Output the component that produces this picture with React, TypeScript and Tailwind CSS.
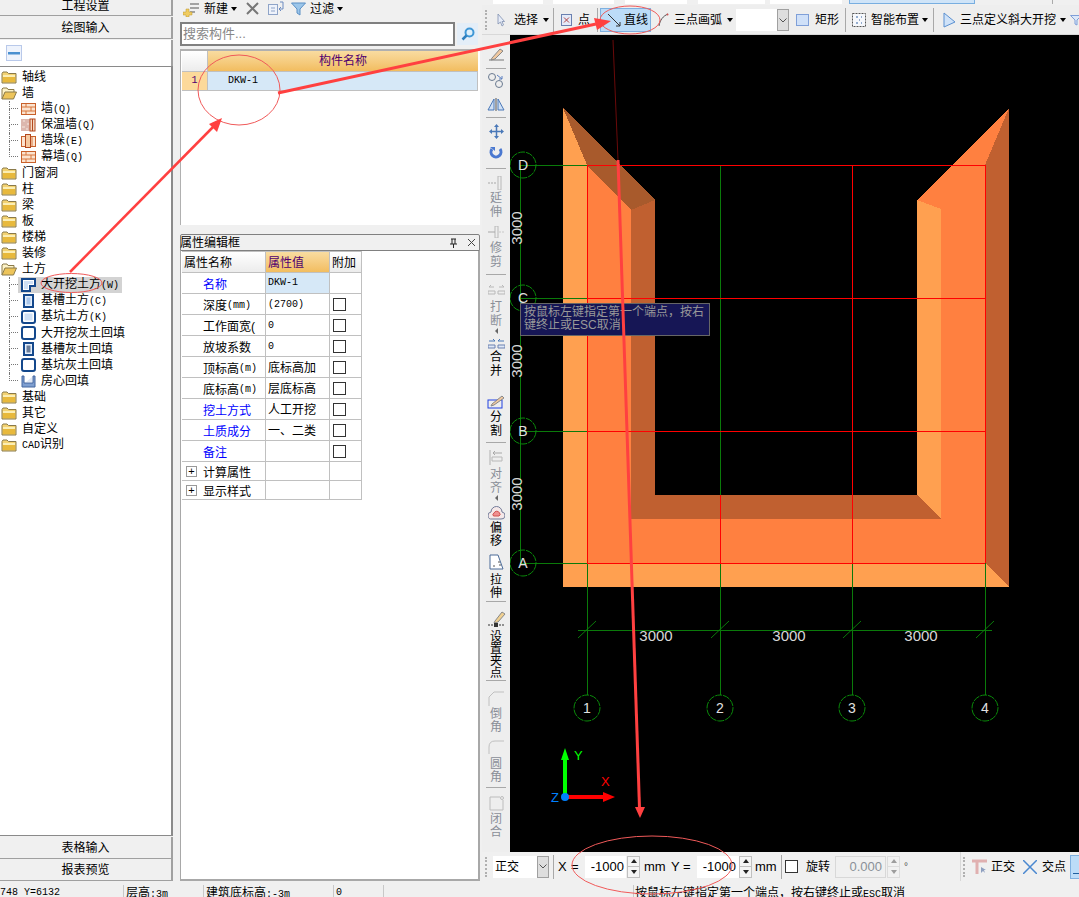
import type { ReactNode } from 'react'

const mono = "font-['Liberation_Mono','Noto_Sans_CJK_SC',monospace] text-[10px]"

function FolderClosed() {
  return (
    <svg width="16" height="14" viewBox="0 0 16 14" className="shrink-0">
      <path d="M1 3.5 L2 2 H6 L7.5 3.5 H15 V13 H1 Z" fill="#f3d271" stroke="#8a7a4a" />
      <rect x="2" y="5" width="12" height="7" fill="#e8b93c" />
      <rect x="2" y="5" width="12" height="2" fill="#fbeeb4" />
    </svg>
  )
}

function FolderOpen() {
  return (
    <svg width="16" height="14" viewBox="0 0 16 14" className="shrink-0">
      <path d="M1 13 V3 L2 2 H6 L7 3.5 H13 V6" fill="#fdf3c8" stroke="#8a7a4a" />
      <path d="M1 13 L4 6 H15.5 L12.5 13 Z" fill="#edc45a" stroke="#8a7a4a" />
    </svg>
  )
}

function BrickIcon() {
  return (
    <svg width="15" height="14" viewBox="0 0 15 14" className="shrink-0">
      <rect x="0.5" y="1.5" width="14" height="11" fill="#fbe3cf" stroke="#c8602a" />
      <path d="M1 5 H14 M1 9 H14 M5 2 V5 M10 5 V9 M5 9 V12" stroke="#d8763c" fill="none" />
    </svg>
  )
}

function InsulatedIcon() {
  return (
    <svg width="15" height="14" viewBox="0 0 15 14" className="shrink-0">
      <rect x="0" y="1" width="9" height="12" fill="#dcb7ae" />
      <path d="M2 3h2M6 6h2M1 9h3M5 11h2" stroke="#f5e8e0" />
      <rect x="9" y="1" width="5" height="12" fill="#f4d9c4" stroke="#b3481e" />
      <path d="M11.5 1V13" stroke="#b3481e" />
    </svg>
  )
}

function PierIcon() {
  return (
    <svg width="15" height="14" viewBox="0 0 15 14" className="shrink-0">
      <rect x="0.5" y="2.5" width="14" height="10" fill="#fbe3cf" stroke="#c8602a" />
      <rect x="4.5" y="0.5" width="5" height="13" fill="#f6c9a0" stroke="#b3481e" />
      <path d="M11 3V12" stroke="#d8763c" />
    </svg>
  )
}

function PitIcon({ kind }: { kind: 'open' | 'trench' | 'pit' | 'openFill' | 'trenchFill' | 'pitFill' }) {
  if (kind === 'open') {
    return (
      <svg width="15" height="14" viewBox="0 0 15 14" className="shrink-0">
        <path d="M1 1 H14 V8 H9 V13 H1 Z" fill="#fff" stroke="#14488c" strokeWidth="2" />
        <path d="M3 3 H12 V6 H7 V11 H3 Z" fill="#cfe0f5" />
      </svg>
    )
  }
  if (kind === 'trench' || kind === 'trenchFill') {
    return (
      <svg width="15" height="14" viewBox="0 0 15 14" className="shrink-0">
        <rect x="3" y="1" width="9" height="12" fill="#e4eefa" stroke="#14488c" strokeWidth="2" />
        <rect x="5.5" y="3.5" width="4" height="7" fill={kind === 'trench' ? '#a9c6ea' : '#6a7d99'} />
      </svg>
    )
  }
  return (
    <svg width="15" height="14" viewBox="0 0 15 14" className="shrink-0">
      <rect x="1" y="1" width="13" height="12" rx="2" fill="#fff" stroke="#14488c" strokeWidth="2" />
      {kind === 'pit' && <rect x="3.5" y="3.5" width="8" height="7" fill="#cfe0f5" />}
    </svg>
  )
}

function RoomFillIcon() {
  return (
    <svg width="15" height="14" viewBox="0 0 15 14" className="shrink-0">
      <path d="M1 2 V13 H14 V2 H12 V9 H3 V2 Z" fill="#7f9fd0" stroke="#4466a0" />
      <path d="M5 8 L11 3 V8 Z" fill="#dfe7f5" />
    </svg>
  )
}

function TreeFolder({ label, open }: { label: ReactNode; open?: boolean }) {
  return (
    <div className="flex h-4 items-center pl-[1px]">
      {open ? <FolderOpen /> : <FolderClosed />}
      <span className="ml-[5px] whitespace-nowrap">{label}</span>
    </div>
  )
}

function TreeChild({ icon, label, last, active }: { icon: ReactNode; label: ReactNode; last?: boolean; active?: boolean }) {
  return (
    <div className="flex h-4 pl-[9px]">
      <div className="w-[9px] shrink-0">
        <div className="h-2 border-b border-l border-dotted border-[#777]" />
        {!last && <div className="h-2 border-l border-dotted border-[#777]" />}
      </div>
      <div className={active ? 'flex h-4 items-center bg-[#d3d3d3] pl-[3px] pr-[3px]' : 'flex h-4 items-center pl-[3px]'}>
        {icon}
        <span className="ml-[5px] whitespace-nowrap">{label}</span>
      </div>
    </div>
  )
}

function SideButton({ label, className }: { label: string; className: string }) {
  return (
    <div className={`flex items-center justify-center border-b border-r-2 border-[#a0a0a0] bg-[#f0f0f0] ${className}`}>{label}</div>
  )
}

function LeftPanel() {
  return (
    <div className="flex h-[881px] w-[173px] shrink-0 flex-col">
      <SideButton label="工程设置" className="h-[16px] overflow-hidden pb-[3px]" />
      <SideButton label="绘图输入" className="mt-px h-[22px] pt-px" />
      <div className="mt-[1px] flex h-[26px] items-center border-r-2 border-[#a0a0a0] bg-white pl-[6px]">
        <svg width="16" height="16" viewBox="0 0 16 16">
          <rect x="0.5" y="0.5" width="15" height="15" fill="#eef3fc" stroke="#b9c9ea" />
          <rect x="2" y="7" width="12" height="2.5" fill="#4a90d0" />
        </svg>
      </div>
      <div className="min-h-0 flex-1 border-r-2 border-t border-b border-[#8a8a8a] bg-white pt-[2px]">
        <TreeFolder label="轴线" />
        <TreeFolder label="墙" open />
        <TreeChild icon={<BrickIcon />} label={<>墙<span className={mono}>(Q)</span></>} />
        <TreeChild icon={<InsulatedIcon />} label={<>保温墙<span className={mono}>(Q)</span></>} />
        <TreeChild icon={<PierIcon />} label={<>墙垛<span className={mono}>(E)</span></>} />
        <TreeChild icon={<BrickIcon />} label={<>幕墙<span className={mono}>(Q)</span></>} last />
        <TreeFolder label="门窗洞" />
        <TreeFolder label="柱" />
        <TreeFolder label="梁" />
        <TreeFolder label="板" />
        <TreeFolder label="楼梯" />
        <TreeFolder label="装修" />
        <TreeFolder label="土方" open />
        <TreeChild icon={<PitIcon kind="open" />} label={<>大开挖土方<span className={mono}>(W)</span></>} active />
        <TreeChild icon={<PitIcon kind="trench" />} label={<>基槽土方<span className={mono}>(C)</span></>} />
        <TreeChild icon={<PitIcon kind="pit" />} label={<>基坑土方<span className={mono}>(K)</span></>} />
        <TreeChild icon={<PitIcon kind="openFill" />} label="大开挖灰土回填" />
        <TreeChild icon={<PitIcon kind="trenchFill" />} label="基槽灰土回填" />
        <TreeChild icon={<PitIcon kind="pitFill" />} label="基坑灰土回填" />
        <TreeChild icon={<RoomFillIcon />} label="房心回填" last />
        <TreeFolder label="基础" />
        <TreeFolder label="其它" />
        <TreeFolder label="自定义" />
        <TreeFolder label={<><span className={mono}>CAD</span>识别</>} />
      </div>
      <SideButton label="表格输入" className="mt-px h-[22px]" />
      <SideButton label="报表预览" className="h-[22px]" />
    </div>
  )
}

function PropName({ children, blue }: { children: ReactNode; blue?: boolean }) {
  return <div className={blue ? 'flex items-center border-b border-r border-[#c0c0c0] pl-[21px] pt-[3px] text-[#0000ff]' : 'flex items-center border-b border-r border-[#c0c0c0] pl-[21px] pt-[3px]'}>{children}</div>
}

function PropValue({ children }: { children?: ReactNode }) {
  return <div className="flex items-center whitespace-nowrap border-b border-r border-[#c0c0c0] pl-[2px] pt-px">{children}</div>
}

function PropCheck() {
  return (
    <div className="flex items-center border-b border-r border-[#c0c0c0] pl-[3px]">
      <div className="h-[13px] w-[13px] border border-[#333] bg-white" />
    </div>
  )
}

function ExpandRow({ label }: { label: string }) {
  return (
    <>
      <div className="flex items-center border-b border-r border-[#c0c0c0] pl-[4px]">
        <div className="flex h-[11px] w-[11px] items-center justify-center border border-[#999] bg-white text-[11px] leading-none">+</div>
        <span className="ml-[6px] pt-[3px]">{label}</span>
      </div>
      <div className="border-b border-r border-[#c0c0c0]" />
      <div className="border-b border-r border-[#c0c0c0]" />
    </>
  )
}

function PropTable() {
  const rows: [string, string][] = [
    ['工作面宽(', '0'],
    ['放坡系数', '0'],
  ]
  return (
    <div className="grid w-[180px] grid-cols-[84px_64px_32px] grid-rows-[21px_21px_21px_21px_21px_21px_21px_21px_21px_21px_19px_19px] border-t border-[#c0c0c0]">
      <div className="flex items-center border-b border-r border-[#c0c0c0] bg-gradient-to-b from-white to-[#ececec] pl-[2px] pt-px">属性名称</div>
      <div className="flex items-center border-b border-r border-[#c0c0c0] bg-gradient-to-b from-[#f9dca0] to-[#f2bd5f] pl-[2px] pt-px text-[#500070]">属性值</div>
      <div className="flex items-center border-b border-r border-[#c0c0c0] bg-gradient-to-b from-white to-[#ececec] pl-[2px] pt-px">附加</div>

      <PropName blue>名称</PropName>
      <div className={`flex items-center border-b border-r border-[#c0c0c0] bg-[#d6e8f7] pl-[2px] ${mono}`}>DKW-1</div>
      <div className="border-b border-r border-[#c0c0c0]" />

      <PropName>深度<span className={mono}>(mm)</span></PropName>
      <PropValue><span className={mono}>(2700)</span></PropValue>
      <PropCheck />

      {rows.map(([name, value]) => (
        <div key={name} className="contents">
          <PropName>{name}</PropName>
          <PropValue><span className={mono}>{value}</span></PropValue>
          <PropCheck />
        </div>
      ))}

      <PropName>顶标高<span className={mono}>(m)</span></PropName>
      <PropValue>底标高加</PropValue>
      <PropCheck />

      <PropName>底标高<span className={mono}>(m)</span></PropName>
      <PropValue>层底标高</PropValue>
      <PropCheck />

      <PropName blue>挖土方式</PropName>
      <PropValue>人工开挖</PropValue>
      <PropCheck />

      <PropName blue>土质成分</PropName>
      <PropValue>一、二类</PropValue>
      <PropCheck />

      <PropName blue>备注</PropName>
      <PropValue />
      <PropCheck />

      <ExpandRow label="计算属性" />
      <ExpandRow label="显示样式" />
    </div>
  )
}

function Caret({ className }: { className?: string }) {
  return <div className={`h-0 w-0 shrink-0 border-x-[3px] border-t-[4px] border-x-transparent border-t-black ${className ?? ''}`} />
}

function MiddlePanel() {
  return (
    <div className="ml-[7px] flex h-[881px] w-[300px] shrink-0 flex-col">
      <div className="flex h-[21px] items-center pb-[4px]">
        <svg width="17" height="16" viewBox="0 0 17 16" className="ml-[3px] shrink-0">
          <path d="M7 3H16M7 7H16M7 11H12" stroke="#555" />
          <path d="M3 8H6V11H9V14H6V16H3V14H0V11H3Z" fill="#f0cc60" stroke="#b89530" strokeWidth="0.5" />
        </svg>
        <span className="ml-[4px]">新建</span>
        <Caret className="ml-[3px]" />
        <svg width="13" height="13" viewBox="0 0 13 13" className="ml-[9px] shrink-0">
          <path d="M1 1L12 12M12 1L1 12" stroke="#777" strokeWidth="2" />
        </svg>
        <svg width="16" height="15" viewBox="0 0 16 15" className="ml-[9px] shrink-0">
          <rect x="0.5" y="3.5" width="9" height="10" fill="#eef2fa" stroke="#8fa4c8" />
          <path d="M3 7H7M3 10H7" stroke="#8fa4c8" />
          <path d="M12 1H15V8H12M13 10L11 8L13 6" fill="none" stroke="#6a8ac0" />
        </svg>
        <svg width="15" height="14" viewBox="0 0 15 14" className="ml-[7px] shrink-0">
          <path d="M0.5 1H14.5L9 7V13L6 11V7Z" fill="#9cc6ea" stroke="#5a8fc4" />
        </svg>
        <span className="ml-[4px]">过滤</span>
        <Caret className="ml-[3px]" />
      </div>
      <div className="mt-px flex h-[24px] items-center">
        <div className="flex h-[24px] w-[275px] items-center border-2 border-[#808080] bg-white pl-[1px] text-[13px] text-[#888]">搜索构件...</div>
        <div className="ml-[2px] flex h-[22px] w-[21px] items-center justify-center bg-[#e4eef8]">
          <svg width="14" height="14" viewBox="0 0 14 14">
            <circle cx="8.5" cy="5.5" r="4" fill="#dff0fb" stroke="#3f97d6" strokeWidth="2" />
            <path d="M5.5 8.5L1.5 12.5" stroke="#2f7fbe" strokeWidth="2.5" />
          </svg>
        </div>
      </div>
      <div className="mt-[3px] h-[176px] border-t-2 border-l border-[#b0b0b0] bg-white pl-px">
        <div className="flex h-[21px]">
          <div className="w-[26px] border-b border-r border-[#c0c0c0] bg-gradient-to-b from-white to-[#ececec]" />
          <div className="flex w-[270px] items-center justify-center border-b border-[#c0c0c0] bg-gradient-to-b from-[#f9dca0] to-[#f2bd5f] text-[#500070]">构件名称</div>
        </div>
        <div className="flex h-[19px]">
          <div className={`flex w-[26px] items-center justify-center border-b border-r border-[#c0c0c0] bg-[#fcd99a] text-[#500070] ${mono}`}>1</div>
          <div className={`flex w-[270px] items-center border-b border-r border-[#c0c0c0] bg-[#d6e8f7] pl-[20px] ${mono}`}>DKW-1</div>
        </div>
      </div>
      <div className="mt-[9px] flex h-[17px] items-center rounded-t-[2px] border border-[#808080] bg-[#f0f0f0] pr-[3px]">
        <span className="-ml-[1px]">属性编辑框</span>
        <svg width="9" height="10" viewBox="0 0 9 10" className="ml-auto shrink-0">
          <path d="M2 1H7M3 1V6M6 1V6M1 6H8M4.5 6V10" stroke="#222" fill="none" />
        </svg>
        <svg width="9" height="9" viewBox="0 0 9 9" className="ml-[9px] shrink-0">
          <path d="M1 1L8 8M8 1L1 8" stroke="#444" />
        </svg>
      </div>
      <div className="min-h-0 flex-1 border-b-2 border-l border-r-2 border-[#a8a8a8] bg-white pl-px">
        <PropTable />
      </div>
    </div>
  )
}

function HSep({ className }: { className: string }) {
  return <div className={`h-[24px] w-px shrink-0 bg-[#a8a8a8] ${className}`} />
}

function Grip({ className }: { className: string }) {
  return <div className={`h-[20px] w-[3px] shrink-0 border-l-2 border-dotted border-[#b0b0b0] ${className}`} />
}

function Spinner({ className }: { className: string }) {
  return (
    <div className={`flex h-[22px] w-[13px] shrink-0 flex-col border border-[#c0c0c0] bg-[#f4f4f4] ${className}`}>
      <div className="flex flex-1 items-center justify-center border-b border-[#c0c0c0]">
        <div className="h-0 w-0 border-x-[3px] border-b-[4px] border-x-transparent border-b-[#222]" />
      </div>
      <div className="flex flex-1 items-center justify-center">
        <div className="h-0 w-0 border-x-[3px] border-t-[4px] border-x-transparent border-t-[#222]" />
      </div>
    </div>
  )
}

function ComboArrow() {
  return (
    <div className="ml-auto flex h-full w-[12px] items-center justify-center border border-[#a0a0a0] bg-[#dedede]">
      <svg width="8" height="5" viewBox="0 0 8 5">
        <path d="M0.5 0.5L4 4L7.5 0.5" fill="none" stroke="#555" />
      </svg>
    </div>
  )
}

function TopSliver() {
  return (
    <div className="flex h-[5px] items-start bg-[#f0f0f0]">
      <div className="ml-[11px] h-[4px] w-[50px] bg-white" />
      <div className="ml-[10px] h-[4px] w-[61px] bg-white" />
      <div className="ml-[11px] h-[4px] w-[62px] bg-white" />
      <div className="ml-[11px] h-[4px] w-[67px] bg-white" />
      <div className="ml-[5px] h-[4px] w-[72px] bg-white" />
      <div className="ml-[7px] h-[4px] w-[126px] border-x border-b border-[#78aee0] bg-[#cfe4f8]" />
      <div className="ml-[77px] h-[4px] w-px bg-[#aaa]" />
    </div>
  )
}

function TopToolbar() {
  return (
    <div className="flex h-[30px] items-center overflow-hidden whitespace-nowrap border-b border-[#d8d8d8] bg-[#eeeeee] pt-px">
      <Grip className="ml-[3px]" />
      <svg width="8" height="14" viewBox="0 0 8 14" className="ml-[9px] shrink-0">
        <path d="M1 1V11L3.5 9L5 13L6.5 12L5 8.5H7.5Z" fill="#e6ecf8" stroke="#8090b0" strokeWidth="0.8" />
      </svg>
      <span className="ml-[9px] shrink-0">选择</span>
      <Caret className="ml-[5px]" />
      <HSep className="ml-[4px]" />
      <svg width="11" height="12" viewBox="0 0 11 12" className="ml-[7px] shrink-0">
        <rect x="0.5" y="0.5" width="10" height="11" fill="#e4eaf8" stroke="#6a80b0" />
        <path d="M3 3.5L8 8.5M8 3.5L3 8.5" stroke="#b04040" />
      </svg>
      <span className="ml-[6px] shrink-0">点</span>
      <HSep className="ml-[7px]" />
      <div className="ml-[2px] flex h-[24px] w-[51px] shrink-0 items-center border border-[#7fb0e0] bg-[#bcdcf8] pl-[6px]">
        <svg width="14" height="14" viewBox="0 0 14 14" className="shrink-0">
          <path d="M1 1L13 13M13 13V9M13 13H9" fill="none" stroke="#333" />
        </svg>
        <span className="ml-[3px]">直线</span>
      </div>
      <svg width="11" height="14" viewBox="0 0 11 14" className="ml-[7px] shrink-0">
        <path d="M1 13C2 7 5 3 10 1" fill="none" stroke="#555" />
        <circle cx="9.5" cy="1.5" r="1" fill="#d05050" />
      </svg>
      <span className="ml-[5px] shrink-0">三点画弧</span>
      <Caret className="ml-[5px]" />
      <div className="ml-[3px] flex h-[22px] w-[53px] shrink-0 bg-white">
        <ComboArrow />
      </div>
      <svg width="13" height="12" viewBox="0 0 13 12" className="ml-[7px] shrink-0">
        <rect x="0.5" y="0.5" width="12" height="11" fill="#cfe0f8" stroke="#7f9fd8" />
      </svg>
      <span className="ml-[6px] shrink-0">矩形</span>
      <HSep className="ml-[6px]" />
      <svg width="14" height="14" viewBox="0 0 14 14" className="ml-[6px] shrink-0">
        <rect x="0.5" y="0.5" width="13" height="13" fill="#f6f8fc" stroke="#555" strokeDasharray="2 1" />
        <path d="M4 4h2M9 4h1M7 7h1M4 10h2M9 10h1" stroke="#3060a0" />
      </svg>
      <span className="ml-[5px] shrink-0">智能布置</span>
      <Caret className="ml-[3px]" />
      <HSep className="ml-[5px]" />
      <svg width="12" height="17" viewBox="0 0 12 17" className="ml-[9px] shrink-0">
        <path d="M1 1L12 10L1 15Z" fill="#cfe2f8" stroke="#5a8fd0" />
      </svg>
      <span className="ml-[5px] shrink-0">三点定义斜大开挖</span>
      <Caret className="ml-[4px]" />
      <svg width="12" height="12" viewBox="0 0 12 12" className="ml-[4px] shrink-0">
        <path d="M0.5 1.5H11.5L7 6V11L5 10V6Z" fill="#dce8f8" stroke="#7f9fd8" />
      </svg>
    </div>
  )
}

function VSep({ className }: { className: string }) {
  return <div className={`h-px w-[20px] shrink-0 bg-[#a8a8a8] ${className}`} />
}

function VLabel({ text, dim, className }: { text: string; dim?: boolean; className: string }) {
  return (
    <div className={`${dim ? 'text-[#8a8f98]' : 'text-black'} flex shrink-0 flex-col items-center ${className}`}>
      {text.split('').map((c, i) => (
        <span key={i}>{c}</span>
      ))}
    </div>
  )
}

function SmallLeft({ className }: { className: string }) {
  return <div className={`h-0 w-0 shrink-0 border-y-[3px] border-r-[3px] border-y-transparent border-r-[#666] ${className}`} />
}

function EditBar() {
  return (
    <div className="flex w-[28px] shrink-0 flex-col items-center bg-[#eeeeee]">
      <svg width="18" height="13" viewBox="0 0 18 13" className="mt-[13px] shrink-0">
        <path d="M2 12H17" stroke="#777" />
        <path d="M5 10L13 1L16 3L8 11L4 12Z" fill="#f0c8a0" stroke="#888" />
      </svg>
      <VSep className="mt-[7px]" />
      <svg width="18" height="16" viewBox="0 0 18 16" className="mt-[4px] shrink-0">
        <circle cx="5" cy="4" r="3.5" fill="none" stroke="#6a7a90" />
        <circle cx="12" cy="11" r="3.5" fill="none" stroke="#6a7a90" />
        <path d="M10 2L15 6M15 6V3M15 6H12" fill="none" stroke="#5a7fc0" />
      </svg>
      <svg width="18" height="13" viewBox="0 0 18 13" className="mt-[9px] shrink-0">
        <path d="M7 1V12H1Z" fill="#cfe0f5" stroke="#4a78b8" />
        <path d="M11 1V12H17Z" fill="#cfe0f5" stroke="#4a78b8" />
        <path d="M9 0V13" stroke="#555" />
      </svg>
      <VSep className="mt-[6px]" />
      <svg width="15" height="15" viewBox="0 0 15 15" className="mt-[6px] shrink-0">
        <path d="M7.5 0L10 3H5ZM7.5 15L5 12H10ZM0 7.5L3 5V10ZM15 7.5L12 10V5Z" fill="#4a78b8" />
        <path d="M7.5 2V13M2 7.5H13" stroke="#4a78b8" strokeWidth="1.5" />
      </svg>
      <svg width="14" height="13" viewBox="0 0 14 13" className="mt-[8px] shrink-0">
        <path d="M3 2A5 5 0 1 0 11 2" fill="none" stroke="#4a78d0" strokeWidth="3" />
        <path d="M1 0H6V4Z" fill="#4a78d0" />
      </svg>
      <VSep className="mt-[8px]" />
      <svg width="16" height="14" viewBox="0 0 16 14" className="mt-[7px] shrink-0">
        <path d="M13 0V14M10 0V14M10 0H13M10 14H13" stroke="#b8b8b8" fill="none" />
        <path d="M0 7H9" stroke="#a8a8a8" strokeDasharray="2 1" />
      </svg>
      <VLabel text="延伸" dim className="mt-px leading-[14px]" />
      <svg width="16" height="12" viewBox="0 0 16 12" className="mt-[7px] shrink-0">
        <path d="M7 0V12M10 0V12M7 0H10M7 12H10" stroke="#b8b8b8" fill="none" />
        <path d="M0 6H7" stroke="#a8a8a8" />
        <path d="M11 6H16" stroke="#c8c8c8" strokeDasharray="2 1" />
      </svg>
      <VLabel text="修剪" dim className="mt-[3px] leading-[14px]" />
      <VSep className="mt-[5px]" />
      <svg width="17" height="11" viewBox="0 0 17 11" className="mt-[9px] shrink-0">
        <path d="M0 7H7V10H0ZM10 7H17V10H10Z" fill="none" stroke="#b8b8b8" />
        <path d="M1 3H6M11 3H16M1 3L3 1M16 3L14 1" stroke="#b8b8b8" />
      </svg>
      <VLabel text="打断" dim className="mt-[5px] leading-[14px]" />
      <SmallLeft className="mt-0" />
      <svg width="17" height="11" viewBox="0 0 17 11" className="mt-[4px] shrink-0">
        <path d="M0 7H7V10H0ZM10 7H17V10H10Z" fill="#dfe8f6" stroke="#6a80b0" />
        <path d="M1 3H7M10 3H16M7 3L5 1M10 3L12 1" stroke="#4a78b8" />
      </svg>
      <VLabel text="合并" className="mt-px leading-[14px]" />
      <svg width="18" height="14" viewBox="0 0 18 14" className="mt-[17px] shrink-0">
        <rect x="1" y="5" width="14" height="8" fill="none" stroke="#2040e0" />
        <path d="M5 9L15 1L17 3L7 10L4 11Z" fill="#f0c8a0" stroke="#888" />
      </svg>
      <VLabel text="分割" className="mt-px leading-[14px]" />
      <VSep className="mt-[4px]" />
      <svg width="14" height="15" viewBox="0 0 14 15" className="mt-[7px] shrink-0">
        <path d="M1 0V15" stroke="#b0b0b0" />
        <path d="M3 7H13V11H3Z" fill="none" stroke="#b8b8b8" />
        <path d="M13 3H4L6 1M4 3L6 5" fill="none" stroke="#a8a8a8" />
      </svg>
      <VLabel text="对齐" dim className="mt-[2px] leading-[14px]" />
      <SmallLeft className="mt-0" />
      <svg width="17" height="14" viewBox="0 0 17 14" className="mt-[5px] shrink-0">
        <path d="M4 13A3.5 3.5 0 0 1 3 6A5.5 5.5 0 0 1 14 6A3.5 3.5 0 0 1 13 13Z" fill="#f5e8e8" stroke="#707a98" />
        <path d="M5.5 10A2 2 0 0 1 6 7A3 3 0 0 1 11.5 7A2 2 0 0 1 11 10Z" fill="#f09090" stroke="#d05050" />
      </svg>
      <VLabel text="偏移" className="mt-[2px] leading-[13px]" />
      <svg width="15" height="16" viewBox="0 0 15 16" className="mt-[6px] shrink-0">
        <path d="M1 1H9L14 15H1Z" fill="#fff" stroke="#4a6a98" />
        <path d="M9 8H11M10 11H12M4 12H6" stroke="#555" />
      </svg>
      <VLabel text="拉伸" className="mt-[4px] leading-[13px]" />
      <VSep className="mt-px" />
      <svg width="19" height="17" viewBox="0 0 19 17" className="mt-[8px] shrink-0">
        <path d="M8 11L15 2L18 4L11 12L7 13Z" fill="#f0d090" stroke="#888" />
        <path d="M1 15H6M12 15H18" stroke="#333" strokeDasharray="2 1" />
        <rect x="7" y="13" width="4" height="4" fill="#333" />
      </svg>
      <VLabel text="设置夹点" className="mt-[4px] leading-[12px]" />
      <VSep className="mt-px" />
      <svg width="16" height="15" viewBox="0 0 16 15" className="mt-[10px] shrink-0">
        <path d="M1 15V6L6 1H16" fill="none" stroke="#c0c0c0" />
      </svg>
      <VLabel text="倒角" dim className="mt-[2px] leading-[13px]" />
      <svg width="16" height="14" viewBox="0 0 16 14" className="mt-[6px] shrink-0">
        <path d="M1 14V7Q1 1 7 1H16" fill="none" stroke="#c0c0c0" />
      </svg>
      <VLabel text="圆角" dim className="mt-[4px] leading-[13px]" />
      <VSep className="mt-[3px]" />
      <svg width="15" height="15" viewBox="0 0 15 15" className="mt-[8px] shrink-0">
        <path d="M11 1H1V14H14V4" fill="none" stroke="#bcbcbc" />
        <circle cx="13" cy="2" r="1.5" fill="none" stroke="#bcbcbc" />
      </svg>
      <VLabel text="闭合" dim className="mt-[2px] leading-[13px]" />
    </div>
  )
}

function Bubble({ x, y, label }: { x: number; y: number; label: string }) {
  return (
    <g>
      <circle cx={x} cy={y} r="13" fill="none" stroke="#0a8a0a" strokeDasharray="7 1" />
      <text x={x} y={y + 5} textAnchor="middle" fontSize="14" fill="#e0e0e0" fontFamily="Liberation Sans">{label}</text>
    </g>
  )
}

function DrawingCanvas() {
  const xs = [587, 720, 852, 985]
  const ys = [165, 298, 431, 563]
  return (
    <svg viewBox="510 35 569 817" width="569" height="817" className="block shrink-0" shapeRendering="crispEdges">
      <rect x="510" y="35" width="569" height="817" fill="#000" />
      {/* floor */}
      <polygon points="917,200 1009,108 985,165 985,563 587,563 587,165 631,209 631,519 941,519 941,209" fill="#ff8040" />
      {/* light faces */}
      <polygon points="563,108 587,165 587,563 563,587" fill="#ffa050" />
      <polygon points="587,563 985,563 1009,587 563,587" fill="#ffa050" />
      <polygon points="917,200 941,209 941,519 917,495" fill="#ffa050" />
      {/* dark faces */}
      <polygon points="563,108 655,200 631,210 587,165" fill="#a85a2c" />
      <polygon points="631,210 655,200 655,495 631,519" fill="#c06030" />
      <polygon points="631,519 655,495 917,495 941,519" fill="#c06030" />
      <polygon points="1009,108 1009,587 985,563 985,165" fill="#c06030" />

      {/* axis lines */}
      {xs.map((x) => (
        <line key={x} x1={x} y1="563" x2={x} y2="695" stroke="#0a7a0a" />
      ))}
      <line x1="720" y1="165" x2="720" y2="495" stroke="#0a7a0a" />
      {ys.map((y) => (
        <line key={y} x1="520" y1={y} x2="587" y2={y} stroke="#0a7a0a" />
      ))}
      <line x1="520" y1="165" x2="520" y2="563" stroke="#0a7a0a" />
      <line x1="578" y1="630" x2="992" y2="630" stroke="#0a7a0a" />
      {xs.map((x) => (
        <line key={x} x1={x - 9} y1="638" x2={x + 9} y2="621" stroke="#0a7a0a" shapeRendering="auto" />
      ))}

      {/* red grid over the pit */}
      {ys.map((y) => (
        <line key={y} x1="587" y1={y} x2="985" y2={y} stroke="#ff0000" />
      ))}
      {[587, 852, 985].map((x) => (
        <line key={x} x1={x} y1="165" x2={x} y2="563" stroke="#ff0000" />
      ))}
      <line x1="720" y1="495" x2="720" y2="563" stroke="#ff0000" />

      {/* dimensions */}
      {[656, 789, 921].map((x) => (
        <text key={x} x={x} y="641" textAnchor="middle" fontSize="15" fill="#d8d8d8" fontFamily="Liberation Sans">3000</text>
      ))}
      {[228, 361, 494].map((y) => (
        <text key={y} x="522" y={y} textAnchor="middle" fontSize="15" fill="#d8d8d8" fontFamily="Liberation Sans" transform={`rotate(-90 522 ${y})`}>3000</text>
      ))}

      <g shapeRendering="auto">
        <Bubble x={523} y={165} label="D" />
        <Bubble x={523} y={298} label="C" />
        <Bubble x={523} y={431} label="B" />
        <Bubble x={523} y={563} label="A" />
        <Bubble x={587} y={708} label="1" />
        <Bubble x={720} y={708} label="2" />
        <Bubble x={852} y={708} label="3" />
        <Bubble x={985} y={708} label="4" />

        {/* ucs */}
        <line x1="565" y1="797" x2="565" y2="760" stroke="#00ff00" strokeWidth="4" />
        <polygon points="565,748 561,760 569,760" fill="#00ff00" />
        <line x1="565" y1="797" x2="603" y2="797" stroke="#ff0000" strokeWidth="4" />
        <polygon points="615,797 603,792 603,802" fill="#ff0000" />
        <circle cx="565" cy="797" r="4" fill="#0080ff" />
        <text x="574" y="760" fontSize="13" fill="#00ff00" fontFamily="Liberation Sans">Y</text>
        <text x="601" y="786" fontSize="13" fill="#ff0000" fontFamily="Liberation Sans">X</text>
        <text x="551" y="802" fontSize="13" fill="#0080ff" fontFamily="Liberation Sans">Z</text>
      </g>
    </svg>
  )
}

function BottomToolbar() {
  return (
    <div className="flex h-[29px] items-center overflow-hidden whitespace-nowrap bg-[#f0f0f0] text-[13px]">
      <Grip className="ml-[3px]" />
      <div className="ml-[5px] flex h-[22px] w-[56px] shrink-0 items-center bg-white pl-[2px] text-[12px]">
        正交
        <ComboArrow />
      </div>
      <HSep className="ml-[4px]" />
      <span className="ml-[4px] w-[8px] shrink-0">X</span>
      <span className="ml-[5px] w-[7px] shrink-0">=</span>
      <div className="ml-[7px] flex h-[22px] w-[41px] shrink-0 items-center justify-end bg-white pr-[2px]">-1000</div>
      <Spinner className="ml-px" />
      <span className="ml-[4px] w-[21px] shrink-0">mm</span>
      <span className="ml-[6px] w-[7px] shrink-0">Y</span>
      <span className="ml-[5px] w-[7px] shrink-0">=</span>
      <div className="ml-[7px] flex h-[22px] w-[42px] shrink-0 items-center justify-end bg-white pr-[3px]">-1000</div>
      <Spinner className="" />
      <span className="ml-[3px] w-[22px] shrink-0">mm</span>
      <HSep className="ml-[4px]" />
      <div className="ml-[3px] h-[13px] w-[13px] shrink-0 border border-[#333] bg-white" />
      <span className="ml-[8px] w-[24px] shrink-0 text-[12px]">旋转</span>
      <div className="ml-[5px] flex h-[22px] w-[51px] shrink-0 items-center justify-end border border-[#d8d8d8] pr-[3px] text-[#8a9098]">0.000</div>
      <Spinner className="ml-px opacity-40" />
      <span className="ml-[4px] w-[6px] shrink-0 text-[10px] text-[#555]">°</span>
      <div className="ml-[50px] h-full w-px shrink-0 bg-[#d8d8d8]" />
      <Grip className="ml-[2px]" />
      <svg width="15" height="15" viewBox="0 0 15 15" className="ml-[6px] shrink-0">
        <path d="M0 2H15M5 2V15" stroke="#e0b0b0" strokeWidth="3" />
        <path d="M9 8V14L11 12L13 14L12 11H14Z" fill="#8fa0c0" />
      </svg>
      <span className="ml-[4px] w-[24px] shrink-0 text-[12px]">正交</span>
      <svg width="14" height="14" viewBox="0 0 14 14" className="ml-[8px] shrink-0">
        <path d="M0 0L14 14M14 0L0 14" stroke="#4a88d0" strokeWidth="1.5" />
      </svg>
      <span className="ml-[5px] w-[24px] shrink-0 text-[12px]">交点</span>
      <div className="ml-[4px] flex h-[24px] w-[20px] shrink-0 items-end border border-[#7fb0e0] bg-[#bcdcf8] pb-[4px] pl-[2px]">
        <div className="h-px w-[6px] bg-[#2060a0]" />
      </div>
    </div>
  )
}

function StatusBar() {
  return (
    <div className="flex h-[13px] shrink-0 overflow-hidden whitespace-nowrap bg-[#f0f0f0] pt-px leading-[16px]">
      <div className={`w-[124px] shrink-0 border-r border-[#c8c8c8] ${mono}`}>748 Y=6132</div>
      <div className="w-[80px] shrink-0 border-r border-[#c8c8c8] pl-[2px]">层高<span className={mono}>:3m</span></div>
      <div className="w-[130px] shrink-0 border-r border-[#c8c8c8] pl-[2px]">建筑底标高<span className={mono}>:-3m</span></div>
      <div className={`w-[50px] shrink-0 border-r border-[#c8c8c8] pl-[2px] ${mono}`}>0</div>
      <div className="w-[250px] shrink-0 border-r border-[#c8c8c8]" />
      <div className="pl-px">按鼠标左键指定第一个端点，按右键终止或<span className={mono}>ESC</span>取消</div>
    </div>
  )
}

function Annotations() {
  return (
    <svg width="1079" height="897" viewBox="0 0 1079 897" className="pointer-events-none absolute left-0 top-0">
      <g fill="none" stroke="#f05a5a">
        <ellipse cx="239" cy="90" rx="41" ry="35" />
        <ellipse cx="71.5" cy="283" rx="30.5" ry="9.5" />
        <ellipse cx="630" cy="20" rx="30" ry="14" />
        <ellipse cx="652" cy="865" rx="80" ry="29" />
      </g>
      <line x1="70" y1="272" x2="216" y2="124" stroke="#ff4040" strokeWidth="2.5" />
      <polygon points="222,118 217,132 209,124" fill="#ff4040" />
      <line x1="278" y1="93" x2="596" y2="24" stroke="#ff4040" strokeWidth="3" />
      <polygon points="611,21 594,18 597,30" fill="#ff4040" />
      <line x1="613" y1="40" x2="618" y2="160" stroke="#6a0a0a" strokeWidth="1" />
      <line x1="618" y1="160" x2="639.5" y2="808" stroke="#ff4040" strokeWidth="3" />
      <polygon points="640,818 635,807 645,807" fill="#ff4040" />
    </svg>
  )
}

export default function App() {
  return (
    <div className="relative flex h-[897px] w-[1079px] flex-col overflow-hidden bg-[#f0f0f0] font-['Liberation_Sans','Noto_Sans_CJK_SC',sans-serif] text-[12px] leading-[14px] text-black">
      <div className="flex h-[884px] shrink-0">
        <LeftPanel />
        <MiddlePanel />
        <div className="ml-[2px] flex h-[881px] w-[597px] shrink-0 flex-col">
          <TopSliver />
          <TopToolbar />
          <div className="relative flex h-[817px] shrink-0 overflow-hidden">
            <EditBar />
            <DrawingCanvas />
            <div className="absolute left-[38px] top-[268px] h-[33px] w-[190px] whitespace-nowrap border border-[#666] bg-[#161655] px-[3px] pt-[2px] text-[12px] leading-[13px] text-[#999]">
              按鼠标左键指定第一个端点，按右
              <br />
              键终止或ESC取消
            </div>
          </div>
          <BottomToolbar />
        </div>
      </div>
      <StatusBar />
      <Annotations />
    </div>
  )
}
